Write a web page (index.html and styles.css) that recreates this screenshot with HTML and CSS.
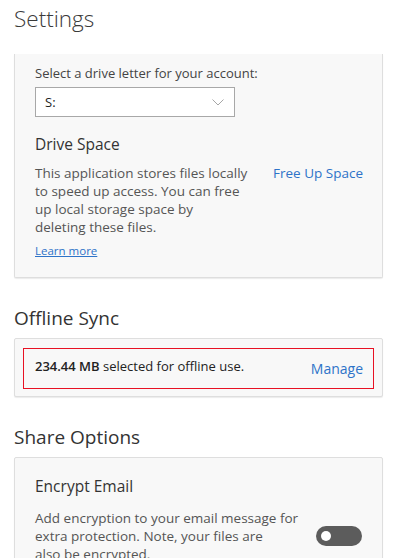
FILE: index.html
```html
<!DOCTYPE html>
<html lang="en">

<head>
  <meta charset="UTF-8">
  <meta name="viewport" content="width=device-width, initial-scale=1.0">
  <title>Settings</title>
  <link rel="stylesheet" href="styles.css">
</head>

<body>
  <header class="page-head">
    <h1>Settings</h1>
  </header>
  <main class="content">
    <section class="card card-clipped">
      <div class="label">Select a drive letter for your account:</div>
      <div class="select">
        <span>S:</span>
        <svg width="12" height="7" viewBox="0 0 12 7"><path d="M0.5 0.5 L6 6 L11.5 0.5" fill="none" stroke="#a6a6a6" stroke-width="1"/></svg>
      </div>
      <h3 class="card-title drive-title">Drive Space</h3>
      <div class="row">
        <p class="desc">This application stores files locally<br>to speed up access. You can free<br>up local storage space by<br>deleting these files.</p>
        <a class="link" href="#">Free Up Space</a>
      </div>
      <a class="learn" href="#">Learn more</a>
    </section>

    <h2 class="section-title">Offline Sync</h2>
    <section class="card card-sync">
      <div class="sync-box">
        <span class="sync-text"><b>234.44 MB</b> selected for offline use.</span>
        <a class="link manage" href="#">Manage</a>
      </div>
    </section>

    <h2 class="section-title">Share Options</h2>
    <section class="card card-share">
      <h3 class="card-title">Encrypt Email</h3>
      <div class="row row-center">
        <p class="desc">Add encryption to your email message for<br>extra protection. Note, your files are<br>also be encrypted.</p>
        <span class="toggle"><span class="knob"></span></span>
      </div>
    </section>
  </main>
</body>

</html>
```

FILE: styles.css
```css
* {
  margin: 0;
  padding: 0;
  box-sizing: border-box;
}

body {
  font-family: "Open Sans", "Noto Sans", sans-serif;
  color: #333;
  background: #fff;
  width: 395px;
  height: 558px;
  overflow: hidden;
}

.page-head {
  height: 54px;
  padding: 3px 14px 0;
}

.page-head h1 {
  font-size: 22.5px;
  font-weight: 300;
  line-height: 32px;
  color: #3a3a3a;
}

.content {
  height: 504px;
  overflow: hidden;
  padding: 0 12px 0 14px;
}

.card {
  background: #f8f8f8;
  border: 1px solid #dedede;
  border-radius: 2px;
  box-shadow: 0 1px 1px rgba(0, 0, 0, 0.08);
}

.card-clipped {
  border-top: none;
  border-radius: 0 0 2px 2px;
  padding: 10px 19px 18px 20px;
}

.label {
  font-size: 13px;
  line-height: 18px;
  color: #444;
}

.select {
  margin-top: 5px;
  width: 200px;
  height: 30px;
  background: #fff;
  border: 1px solid #a8a8a8;
  display: flex;
  align-items: center;
  justify-content: space-between;
  padding: 0 10px 0 9px;
  font-size: 13px;
  color: #222;
}

.card-title {
  font-size: 15.5px;
  font-weight: 400;
  line-height: 22px;
  color: #333;
}

.drive-title {
  margin-top: 16px;
}

.row {
  display: flex;
  justify-content: space-between;
  align-items: flex-start;
  margin-top: 9px;
}

.row-center {
  align-items: center;
  margin-top: 12px;
}

.desc {
  font-size: 13.5px;
  line-height: 18px;
  color: #555;
}

.link {
  color: #2e73c8;
  font-size: 13.5px;
  line-height: 18px;
  text-decoration: none;
}

.learn {
  display: block;
  margin-top: 7px;
  font-size: 11.5px;
  line-height: 16px;
  color: #2e73c8;
  text-decoration: underline;
}

.section-title {
  font-size: 19px;
  font-weight: 400;
  line-height: 28px;
  color: #333;
  margin: 26px 0 6px;
}

.card-sync {
  padding: 9px 8px 7px;
}

.sync-box {
  border: 1px solid #e81123;
  height: 41px;
  display: flex;
  justify-content: space-between;
  align-items: flex-end;
  padding: 0 10px 10px 11px;
}

.sync-text {
  font-size: 13px;
  line-height: 18px;
  color: #222;
  margin-bottom: 3px;
}

.sync-text b {
  font-weight: 600;
}

.manage {
  font-size: 14px;
}

.card-share {
  padding: 17px 19px 20px 20px;
}

.toggle {
  width: 46px;
  height: 20px;
  border-radius: 10px;
  background: #5c5c5c;
  display: flex;
  align-items: center;
  padding-left: 5px;
  margin-right: 1px;
}

.knob {
  width: 10px;
  height: 10px;
  border-radius: 50%;
  background: #fff;
}
```
